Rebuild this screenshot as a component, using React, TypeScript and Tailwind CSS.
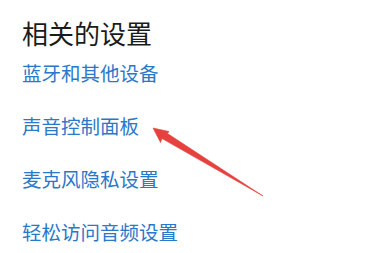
const links = ["蓝牙和其他设备", "声音控制面板", "麦克风隐私设置", "轻松访问音频设置"];

function Arrow() {
  return (
    <svg
      className="pointer-events-none absolute left-0 top-0"
      width="376"
      height="253"
      viewBox="0 0 376 253"
    >
      <path
        d="M153 128 L169 131.5 L167.5 133.5 L263 196 L162 138.5 L160.5 142.5 Z"
        fill="#e5413e"
        stroke="#e5413e"
        strokeWidth="0.6"
        strokeLinejoin="round"
      />
    </svg>
  );
}

export default function App() {
  return (
    <div
      className="relative h-[253px] w-[376px] overflow-hidden bg-white pl-[22px] pt-[17px]"
      style={{ fontFamily: '"Noto Sans CJK SC", "Noto Sans", sans-serif' }}
    >
      <h2 className="text-[26px] leading-[32px] text-[#1b1b1b]">相关的设置</h2>
      <ul className="mt-[12px] flex flex-col gap-[29px]">
        {links.map((label) => (
          <li key={label} className="text-[19.5px] leading-[24px] text-[#2a78c9]">
            {label}
          </li>
        ))}
      </ul>
      <Arrow />
    </div>
  );
}
